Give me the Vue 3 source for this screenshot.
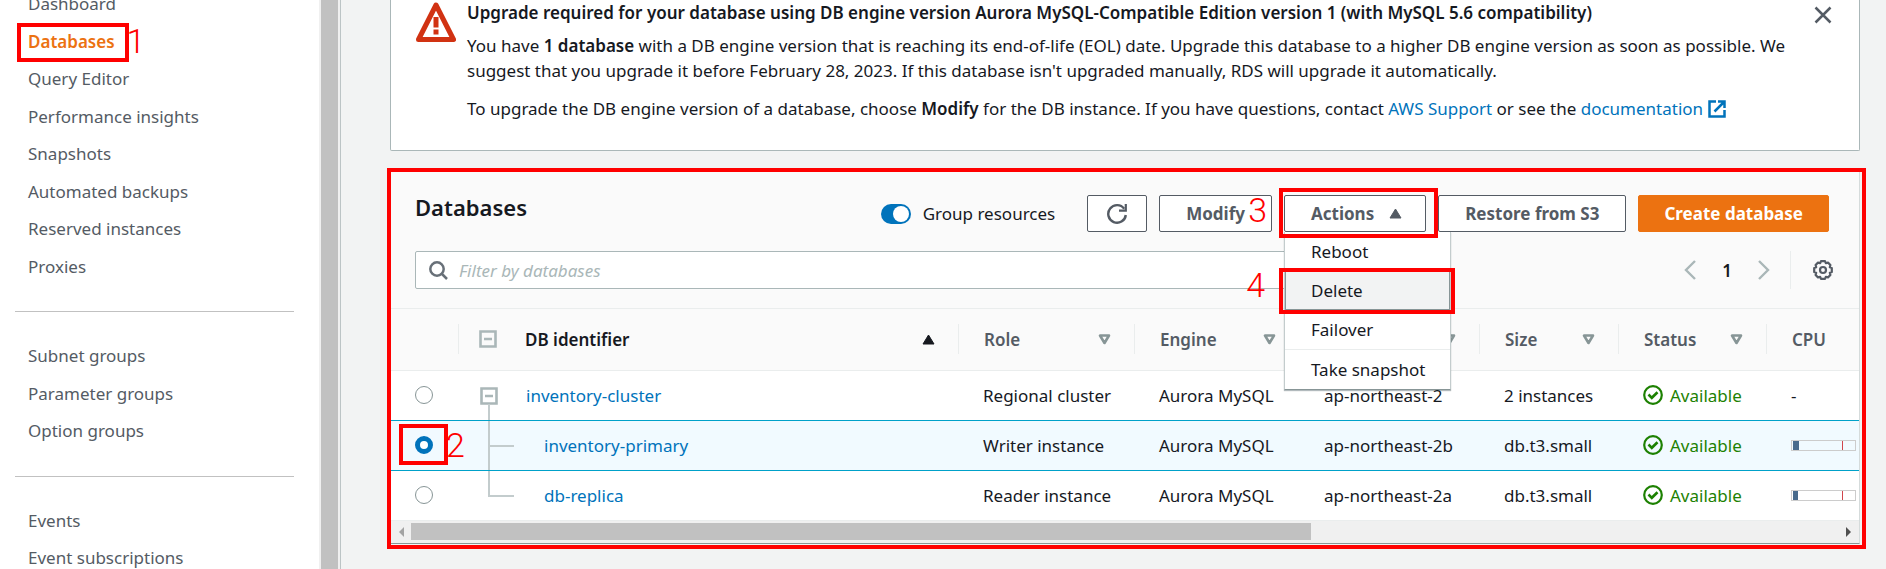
<template>
  <div class="layout">
    <aside class="sidebar">
      <nav class="side-nav" aria-label="Amazon RDS">
        <ul v-for="(group, i) in navGroups" :key="i" class="nav-group">
          <li v-for="item in group" :key="item">
            <a
              href="#"
              class="nav-link"
              :class="{ active: item === 'Databases' }"
              @click.prevent
            >{{ item }}<span v-if="item === 'Databases'" class="mark mark-nav"><b class="step">1</b></span></a>
          </li>
        </ul>
      </nav>
      <div class="side-scroll"></div>
    </aside>

    <main class="content">
      <section v-if="alertOpen" class="alert">
        <svg class="alert-icon" viewBox="0 0 40 40" aria-hidden="true">
          <path d="M20 3 L37.5 37.5 H2.5 Z" fill="none" stroke="#d13212" stroke-width="5" stroke-linejoin="round" />
          <path d="M20 15 V25.5 M20 27.5 V32.5" stroke="#d13212" stroke-width="5" />
        </svg>
        <div class="alert-body">
          <h2>Upgrade required for your database using DB engine version Aurora MySQL-Compatible Edition version 1 (with MySQL 5.6 compatibility)</h2>
          <p>
            You have <strong>1 database</strong> with a DB engine version that is reaching its end-of-life (EOL) date. Upgrade this database to a higher DB engine version as soon as possible. We<br />
            suggest that you upgrade it before February 28, 2023. If this database isn't upgraded manually, RDS will upgrade it automatically.
          </p>
          <p>
            To upgrade the DB engine version of a database, choose <strong>Modify</strong> for the DB instance. If you have questions, contact
            <a href="#">AWS Support</a> or see the
            <a href="#">documentation
              <svg class="ext-icon" viewBox="0 0 18 18" aria-hidden="true">
                <path d="M8 1.5 H1.5 V16.5 H16.5 V10 M10 1.5 H16.5 V8 M16 2 L6.5 11.5" fill="none" stroke="currentColor" stroke-width="2.5" />
              </svg></a>
          </p>
        </div>
        <button type="button" class="icon-btn close-btn" aria-label="Close" @click="alertOpen = false">
          <svg width="18" height="18" viewBox="0 0 18 18"><path d="M1.5 1.5 L16.5 16.5 M16.5 1.5 L1.5 16.5" stroke="#545b64" stroke-width="2.5" /></svg>
        </button>
      </section>

      <section class="panel">
        <header class="panel-head">
          <h1>Databases</h1>
          <div class="toolbar">
            <label class="toggle">
              <input v-model="grouped" type="checkbox" role="switch" />
              Group resources
            </label>
            <button type="button" class="btn btn-refresh" aria-label="Refresh">
              <svg width="22" height="22" viewBox="0 0 22 22">
                <path d="M18.2 5.8 A8.8 8.8 0 1 0 19.8 12" fill="none" stroke="currentColor" stroke-width="2.4" />
                <path d="M19.8 1 V7.6 H13" fill="none" stroke="currentColor" stroke-width="2.2" />
              </svg>
            </button>
            <button type="button" class="btn">Modify</button>
            <div class="dropdown">
              <button type="button" class="btn btn-actions" :aria-expanded="menuOpen" @click="menuOpen = !menuOpen">
                Actions
                <svg width="13" height="11" viewBox="0 0 13 11"><path d="M6.5 1 L12 10 H1 Z" fill="currentColor" stroke="currentColor" stroke-linejoin="round" /></svg>
              </button>
              <span class="mark mark-actions"><b class="step">3</b></span>
              <ul v-if="menuOpen" class="menu">
                <li v-for="action in actions" :key="action" :class="{ hovered: action === 'Delete' }">
                  <button type="button">{{ action }}</button>
                  <span v-if="action === 'Delete'" class="mark mark-delete"><b class="step">4</b></span>
                </li>
              </ul>
            </div>
            <button type="button" class="btn">Restore from S3</button>
            <button type="button" class="btn btn-primary">Create database</button>
          </div>
        </header>

        <div class="filter-row">
          <div class="filter">
            <svg width="19" height="19" viewBox="0 0 19 19" aria-hidden="true">
              <circle cx="8" cy="8" r="6.7" fill="none" stroke="#687078" stroke-width="2.5" />
              <path d="M12.5 12.5 L18 18" stroke="#687078" stroke-width="2.5" />
            </svg>
            <input v-model="query" type="text" placeholder="Filter by databases" aria-label="Filter by databases" />
          </div>
          <div class="pager">
            <button type="button" class="icon-btn" aria-label="Previous page">
              <svg width="12" height="20" viewBox="0 0 12 20"><path d="M11 1 L2 10 L11 19" fill="none" stroke="#aab7b8" stroke-width="2.4" /></svg>
            </button>
            <span class="page">1</span>
            <button type="button" class="icon-btn" aria-label="Next page">
              <svg width="12" height="20" viewBox="0 0 12 20"><path d="M1 1 L10 10 L1 19" fill="none" stroke="#aab7b8" stroke-width="2.4" /></svg>
            </button>
            <div class="settings">
              <button type="button" class="icon-btn" aria-label="Preferences">
                <svg width="20" height="20" viewBox="0 0 20 20" fill="none" stroke="#545b64">
                  <path
                    d="M8 1.2 H12 L12.8 3.2 L15 2.6 L17.4 5 L16.8 7.2 L18.8 8 V12 L16.8 12.8 L17.4 15 L15 17.4 L12.8 16.8 L12 18.8 H8 L7.2 16.8 L5 17.4 L2.6 15 L3.2 12.8 L1.2 12 V8 L3.2 7.2 L2.6 5 L5 2.6 L7.2 3.2 Z"
                    stroke-width="2.2"
                    stroke-linejoin="round"
                  />
                  <circle cx="10" cy="10" r="3" stroke-width="2.2" />
                </svg>
              </button>
            </div>
          </div>
        </div>

        <div class="table-wrap">
          <table>
            <colgroup>
              <col class="c-select" />
              <col class="c-id" />
              <col class="c-role" />
              <col class="c-engine" />
              <col class="c-region" />
              <col class="c-size" />
              <col class="c-status" />
              <col />
            </colgroup>
            <thead>
              <tr>
                <th></th>
                <th class="sorted">
                  <div class="th-inner">
                    <button type="button" class="icon-btn" aria-label="Collapse all">
                      <svg width="18" height="18" viewBox="0 0 18 18"><path d="M1.5 1.5 H16.5 V16.5 H1.5 Z M5 9 H13" fill="none" stroke="#aab7b8" stroke-width="2.6" /></svg>
                    </button>
                    <span class="th-label">DB identifier</span>
                    <svg width="13" height="11" viewBox="0 0 13 11"><path d="M6.5 1 L12 10 H1 Z" fill="currentColor" stroke="currentColor" stroke-linejoin="round" /></svg>
                  </div>
                </th>
                <th v-for="col in columns" :key="col">
                  <div class="th-inner">
                    <span class="th-label">{{ col }}</span>
                    <svg width="13" height="11" viewBox="0 0 13 11"><path d="M2 1.5 H11 L6.5 9 Z" fill="none" stroke="#879596" stroke-width="2.6" stroke-linejoin="round" /></svg>
                  </div>
                </th>
                <th><div class="th-inner"><span class="th-label">CPU</span></div></th>
              </tr>
            </thead>
            <tbody>
              <tr v-for="row in rows" :key="row.id" :class="{ selected: row.id === selected }">
                <td class="select-cell">
                  <div class="radio-box">
                    <input v-model="selected" type="radio" name="db" :value="row.id" :aria-label="row.id" />
                    <span v-if="row.id === 'inventory-primary'" class="mark mark-radio"><b class="step">2</b></span>
                  </div>
                </td>
                <td class="id-cell">
                  <div class="tree">
                    <svg class="branch" width="34" height="49" viewBox="0 0 34 49" aria-hidden="true">
                      <g v-if="row.kind === 'root'" fill="none" stroke="#aab7b8">
                        <path d="M1.5 17.5 H16.5 V32.5 H1.5 Z M5 25 H13" stroke-width="2.6" />
                        <path d="M9 33 V50" stroke-width="2" stroke="#c3cccd" />
                      </g>
                      <path v-else-if="row.kind === 'child'" d="M9 0 V50 M9 25 H34" stroke="#c3cccd" stroke-width="2" />
                      <path v-else d="M9 0 V25 H34" fill="none" stroke="#c3cccd" stroke-width="2" />
                    </svg>
                    <a href="#" :class="{ nested: row.kind !== 'root' }" @click.prevent>{{ row.id }}</a>
                  </div>
                </td>
                <td>{{ row.role }}</td>
                <td>{{ row.engine }}</td>
                <td>{{ row.region }}</td>
                <td>{{ row.size }}</td>
                <td>
                  <span class="status">
                    <svg width="20" height="20" viewBox="0 0 20 20" fill="none" stroke="currentColor" aria-hidden="true">
                      <circle cx="10" cy="10" r="8.8" stroke-width="2.2" />
                      <path d="M5.5 9.5 L8.8 12.8 L14.5 7.2" stroke-width="2.6" />
                    </svg>
                    Available
                  </span>
                </td>
                <td>
                  <div v-if="row.cpu" class="meter"><span :style="{ width: row.cpu + '%' }"></span></div>
                  <template v-else>-</template>
                </td>
              </tr>
            </tbody>
          </table>
        </div>
        <div class="h-scroll">
          <svg width="5" height="10" viewBox="0 0 5 10"><path d="M5 0 V10 L0 5 Z" fill="#a3a3a3" /></svg>
          <div class="h-track"><div class="h-thumb"></div></div>
          <svg width="5" height="10" viewBox="0 0 5 10"><path d="M0 0 V10 L5 5 Z" fill="#505050" /></svg>
        </div>
        <span class="mark mark-panel"></span>
      </section>
    </main>
  </div>
</template>

<script setup>
import { ref } from 'vue';

const navGroups = [
  [
    'Dashboard',
    'Databases',
    'Query Editor',
    'Performance insights',
    'Snapshots',
    'Automated backups',
    'Reserved instances',
    'Proxies'
  ],
  ['Subnet groups', 'Parameter groups', 'Option groups'],
  ['Events', 'Event subscriptions']
];

const actions = ['Reboot', 'Delete', 'Failover', 'Take snapshot'];
const columns = ['Role', 'Engine', 'Region & AZ', 'Size', 'Status'];

const rows = [
  { id: 'inventory-cluster', kind: 'root', role: 'Regional cluster', engine: 'Aurora MySQL', region: 'ap-northeast-2', size: '2 instances', cpu: 0 },
  { id: 'inventory-primary', kind: 'child', role: 'Writer instance', engine: 'Aurora MySQL', region: 'ap-northeast-2b', size: 'db.t3.small', cpu: 10 },
  { id: 'db-replica', kind: 'last', role: 'Reader instance', engine: 'Aurora MySQL', region: 'ap-northeast-2a', size: 'db.t3.small', cpu: 8 }
];

const alertOpen = ref(true);
const grouped = ref(true);
const menuOpen = ref(true);
const query = ref('');
const selected = ref('inventory-primary');
</script>

<style>
body {
  background: #f2f3f3;
}
</style>

<style scoped>
.layout {
  display: flex;
  height: 100vh;
  overflow: hidden;
  color: #16191f;
  font-family: "Noto Sans", "Open Sans", sans-serif;
  font-size: 17px;
  line-height: 25px;
}

.layout * {
  box-sizing: border-box;
}

button,
input {
  font: inherit;
  color: inherit;
}

button {
  cursor: pointer;
}

a {
  color: #0073bb;
  text-decoration: none;
}

ul {
  list-style: none;
  margin: 0;
  padding: 0;
}

.icon-btn {
  display: flex;
  padding: 0;
  border: none;
  background: none;
}

/* sidebar */
.sidebar {
  display: flex;
  flex: none;
  width: 341px;
  overflow: hidden;
  background: #fff;
  border-right: 1px solid #bcc4c5;
}

.side-nav {
  flex: 1;
  margin-top: -9px;
  padding: 0 25px 0 15px;
  line-height: 1.5;
}

.nav-group {
  display: grid;
  gap: 12px;
  padding: 0 13px 32px;
}

.nav-group + .nav-group {
  padding-top: 31px;
  border-top: 1px solid #c1c1c1;
}

.nav-link {
  position: relative;
  color: #545b64;
}

.nav-link.active {
  color: #ec7211;
  font-weight: 600;
}

.side-scroll {
  width: 21px;
  background: #c1c1c1;
  border: solid #f0f0f0;
  border-width: 0 2px;
}

/* notice */
.content {
  flex: 1;
  min-width: 0;
  padding: 0 26px 0 49px;
}

.alert {
  display: flex;
  padding: 0 27px 29px 25px;
  background: #fff;
  border: 1px solid #aab7b8;
  border-top: none;
  border-radius: 0 0 2px 2px;
}

.alert-icon {
  flex: none;
  width: 40px;
  height: 40px;
  margin: 2px 11px 0 0;
}

.alert-body {
  flex: 1;
  min-width: 0;
  white-space: nowrap;
}

.alert h2 {
  margin: 0 0 8px;
  font-size: 17px;
  font-weight: 600;
}

.alert p {
  margin: 0 0 13px;
}

.alert p:last-child {
  margin: 0;
}

strong {
  font-weight: 600;
}

.ext-icon {
  width: 18px;
  height: 18px;
  vertical-align: -3px;
}

.close-btn {
  margin-top: 6px;
  align-self: flex-start;
}

/* databases panel */
.panel {
  position: relative;
  margin-top: 19px;
  background: #fafafa;
  border: 1px solid #d5dbdb;
  border-bottom: 1px solid #879596;
}

.panel-head {
  display: flex;
  justify-content: space-between;
  padding: 24px 30px 0 24px;
}

h1 {
  margin: 0;
  font-size: 22px;
  font-weight: 600;
}

.toolbar {
  display: flex;
  gap: 12px;
}

.toggle {
  display: flex;
  align-items: center;
  gap: 12px;
  margin-right: 20px;
}

.toggle input {
  appearance: none;
  width: 30px;
  height: 20px;
  margin: 0;
  padding: 2px;
  border-radius: 10px;
  background: #aab7b8;
}

.toggle input::before {
  content: "";
  display: block;
  width: 16px;
  height: 16px;
  border-radius: 50%;
  background: #fff;
}

.toggle input:checked {
  background: #0073bb;
}

.toggle input:checked::before {
  margin-left: 10px;
}

.btn {
  display: flex;
  align-items: center;
  height: 37px;
  padding: 0 26px;
  background: #fff;
  border: 1px solid #545b64;
  border-radius: 2px;
  color: #545b64;
  font-weight: 700;
}

.btn-refresh {
  padding: 0 18px;
}

.btn-actions {
  gap: 15px;
  padding-right: 23px;
}

.btn-primary {
  padding: 0 25px;
  background: #ec7211;
  border-color: #ec7211;
  color: #fff;
}

.dropdown {
  position: relative;
}

.menu {
  position: absolute;
  top: 37px;
  left: 0;
  z-index: 2;
  width: 167px;
  background: #fff;
  border: 1px solid #c3cccd;
  border-top: none;
  border-bottom-color: #879596;
  box-shadow: 0 1px 1px rgba(0, 28, 36, 0.3);
}

.menu li {
  position: relative;
}

.menu li:last-child {
  border-top: 1px solid #eaeded;
}

.menu button {
  display: block;
  width: 100%;
  padding: 7px 26px;
  background: none;
  border: none;
  text-align: left;
  white-space: nowrap;
}

.menu .hovered button {
  background: #f2f3f3;
  box-shadow: inset 0 0 0 1px #879596;
}

.filter-row {
  display: flex;
  justify-content: space-between;
  padding: 19px 26px 19px 24px;
}

.filter {
  display: flex;
  align-items: center;
  gap: 11px;
  width: 70%;
  height: 38px;
  padding: 0 13px;
  background: #fff;
  border: 1px solid #aab7b8;
  border-radius: 2px;
}

.filter input {
  flex: 1;
  padding: 0;
  border: none;
  outline: none;
  background: none;
}

.filter input::placeholder {
  color: #aab7b8;
  font-style: italic;
}

.pager {
  display: flex;
  align-items: center;
  gap: 26px;
}

.page {
  font-weight: 600;
}

.settings {
  display: flex;
  align-items: center;
  height: 38px;
  margin-left: -6px;
  padding-left: 22px;
  border-left: 1px solid #eaeded;
}

/* table */
.table-wrap {
  overflow: hidden;
  border-top: 1px solid #eaeded;
}

table {
  width: 100%;
  table-layout: fixed;
  border-collapse: collapse;
  white-space: nowrap;
}

.c-select { width: 67px; }
.c-id { width: 500px; }
.c-role { width: 176px; }
.c-engine { width: 165px; }
.c-region { width: 180px; }
.c-size { width: 139px; }
.c-status { width: 148px; }

th {
  height: 61px;
  padding: 0;
  border-bottom: 1px solid #eaeded;
  color: #545b64;
  font-weight: 600;
  text-align: left;
}

th.sorted {
  color: #16191f;
}

.th-inner {
  display: flex;
  align-items: center;
  height: 30px;
  padding: 0 23px 0 25px;
  border-left: 1px solid #eaeded;
}

.sorted .th-inner {
  padding-left: 20px;
}

.sorted .th-label {
  margin-left: 28px;
}

.th-label {
  flex: 1;
}

td {
  height: 50px;
  padding: 0 0 0 25px;
  background: #fff;
}

tbody tr {
  border-bottom: 1px solid #eaeded;
}

.selected td {
  background: #f1faff;
  border: solid #00a1c9;
  border-width: 1px 0;
}

td.select-cell {
  padding-left: 24px;
}

td.id-cell {
  padding: 0 0 0 22px;
}

.radio-box {
  display: flex;
  position: relative;
  width: 18px;
}

.radio-box input {
  appearance: none;
  width: 18px;
  height: 18px;
  margin: 0;
  border: 1px solid #879596;
  border-radius: 50%;
  background: #fff;
}

.radio-box input:checked {
  border: 5px solid #0073bb;
}

.tree {
  display: flex;
  align-items: center;
  gap: 12px;
}

.branch {
  flex: none;
}

.nested {
  margin-left: 18px;
}

.status {
  display: flex;
  align-items: center;
  gap: 7px;
  color: #1d8102;
}

.meter {
  display: flex;
  position: relative;
  width: 65px;
  height: 11px;
  padding: 0 1px;
  border: 1px solid #ccc;
}

.meter span {
  background: #486a8c;
}

.meter::after {
  content: "";
  position: absolute;
  top: 0;
  bottom: 0;
  left: 80%;
  width: 1px;
  background: #d0454c;
}

.h-scroll {
  display: flex;
  align-items: center;
  gap: 7px;
  height: 22px;
  padding: 0 8px;
  background: #f0f0f0;
}

.h-track {
  flex: 1;
}

.h-thumb {
  width: 63%;
  height: 17px;
  background: #c1c1c1;
}

/* walkthrough marks */
.mark {
  position: absolute;
  z-index: 3;
  border: 4px solid #f00;
  pointer-events: none;
}

.step {
  position: absolute;
  color: #f00;
  font-family: Roboto, "Liberation Sans", sans-serif;
  font-size: 34px;
  font-weight: 300;
  line-height: 34px;
}

.mark-nav {
  inset: -7px -14px -9px -11px;
}

.mark-nav .step {
  top: -3px;
  left: 100%;
  margin-left: 2px;
}

.mark-actions {
  inset: -7px -12px -6px -5px;
}

.mark-actions .step {
  top: 1px;
  right: 100%;
  margin-right: 16px;
}

.mark-delete {
  inset: -3px -5px -4px -6px;
}

.mark-delete .step {
  top: -4px;
  right: 100%;
  margin-right: 18px;
}

.mark-radio {
  inset: -12px -15px -11px -16px;
}

.mark-radio .step {
  top: 0;
  left: 100%;
  margin-left: 2px;
}

.mark-panel {
  inset: -3px -7px -6px -4px;
}
</style>
